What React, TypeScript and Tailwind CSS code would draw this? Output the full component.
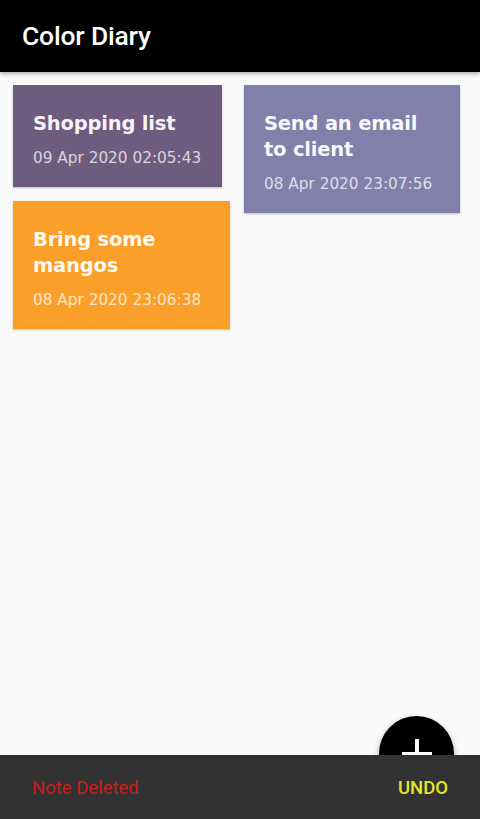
import React from 'react'

type Note = {
  id: number
  title: string
  date: string
  color: string
  width: string
}

const leftNotes: Note[] = [
  { id: 1, title: 'Shopping list', date: '09 Apr 2020 02:05:43', color: 'bg-[#6f5b7d]', width: 'w-[209px]' },
  { id: 3, title: 'Bring some mangos', date: '08 Apr 2020 23:06:38', color: 'bg-[#fa9f29]', width: 'w-[217px]' },
]

const rightNotes: Note[] = [
  { id: 2, title: 'Send an email to client', date: '08 Apr 2020 23:07:56', color: 'bg-[#8180ab]', width: 'w-[216px]' },
]

function NoteCard({ note }: { note: Note }) {
  return (
    <div className={`${note.color} ${note.width} px-5 pt-[26px] pb-[19px] shadow-[0_1px_2px_rgba(0,0,0,0.25)]`}>
      <div className="text-[19.5px] leading-[26px] font-bold text-white/95 font-['DejaVu_Sans',sans-serif] tracking-[-0.2px]">
        {note.title}
      </div>
      <div className="mt-[11px] text-[15.3px] leading-[20px] text-white/75 font-['DejaVu_Sans',sans-serif]">
        {note.date}
      </div>
    </div>
  )
}

export default function App() {
  return (
    <div className="h-[819px] w-[480px] flex flex-col bg-[#fafafa] overflow-hidden font-['Roboto',sans-serif]">
      {/* Toolbar */}
      <header className="h-[72px] bg-black flex items-center px-[22px] shadow-[0_2px_4px_rgba(0,0,0,0.3)] relative z-10 shrink-0">
        <h1 className="text-white text-[26.5px] font-medium tracking-[-0.2px]">Color Diary</h1>
      </header>

      {/* Notes grid */}
      <main className="flex-1 relative">
        <div className="flex gap-[14px] pl-[13px] pt-[13px]">
          <div className="flex flex-col gap-[14px]">
            {leftNotes.map(n => <NoteCard key={n.id} note={n} />)}
          </div>
          <div className="flex flex-col gap-[14px]">
            {rightNotes.map(n => <NoteCard key={n.id} note={n} />)}
          </div>
        </div>

        {/* FAB, partly under the snackbar */}
        <button className="absolute left-[379px] top-[644px] w-[75px] h-[75px] rounded-full bg-black flex items-center justify-center shadow-[0_3px_6px_rgba(0,0,0,0.35)]">
          <svg width="34" height="34" viewBox="0 0 34 34">
            <path d="M17 2v30M2 17h30" stroke="white" strokeWidth="4" />
          </svg>
        </button>
      </main>

      {/* Snackbar */}
      <div className="h-[64px] bg-[#323232] flex items-center justify-between pl-[32px] pr-[32px] pt-[3px] relative z-10 shrink-0">
        <span className="text-[#c91d1d] text-[18.5px]">Note Deleted</span>
        <span className="text-[#e6e629] text-[18.5px] font-medium">UNDO</span>
      </div>
    </div>
  )
}
